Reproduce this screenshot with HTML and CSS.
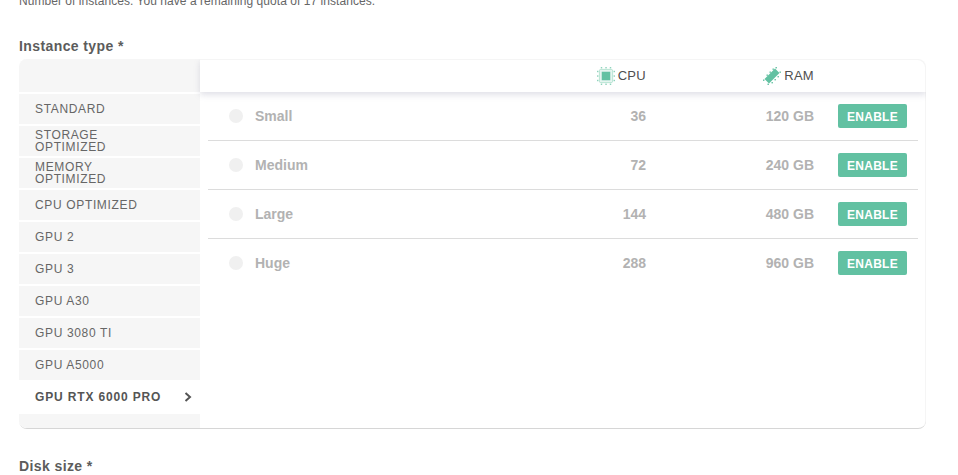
FILE: index.html
```html
<!DOCTYPE html>
<html lang="en">

<head>
    <meta charset="UTF-8">
    <title>Instance type</title>
    <link rel="stylesheet" href="styles.css">
</head>

<body>
    <p class="quota">Number of instances. You have a remaining quota of 17 instances.</p>

    <h2 class="field-label">Instance type *</h2>
    <div class="picker">
        <ul class="tabs">
            <li class="tab-top"></li>
            <li class="tab">STANDARD</li>
            <li class="tab">STORAGE OPTIMIZED</li>
            <li class="tab">MEMORY OPTIMIZED</li>
            <li class="tab">CPU OPTIMIZED</li>
            <li class="tab">GPU 2</li>
            <li class="tab">GPU 3</li>
            <li class="tab">GPU A30</li>
            <li class="tab">GPU 3080 TI</li>
            <li class="tab">GPU A5000</li>
            <li class="tab tab-active">GPU RTX 6000 PRO
                <svg class="chevron" width="8" height="10" viewBox="0 0 8 10">
                    <path d="M1.5 1 L6 5 L1.5 9" fill="none" stroke="#555" stroke-width="2" />
                </svg>
            </li>
            <li class="tab-bottom"></li>
        </ul>

        <div class="plans">
            <div class="plans-head">
                <div class="col-cpu">
                    <svg width="18" height="18" viewBox="0 0 19 19">
                        <rect x="2.5" y="2.5" width="14" height="14" rx="1.5" fill="#e6f5f0" stroke="#b5e2d2" />
                        <rect x="5" y="5" width="9" height="9" fill="#62c1a2" />
                        <g fill="#8ed3bc">
                            <rect x="4" y="0" width="1.5" height="1.5" />
                            <rect x="8.8" y="0" width="1.5" height="1.5" />
                            <rect x="13.5" y="0" width="1.5" height="1.5" />
                            <rect x="4" y="17.5" width="1.5" height="1.5" />
                            <rect x="8.8" y="17.5" width="1.5" height="1.5" />
                            <rect x="13.5" y="17.5" width="1.5" height="1.5" />
                            <rect x="0" y="4" width="1.5" height="1.5" />
                            <rect x="0" y="8.8" width="1.5" height="1.5" />
                            <rect x="0" y="13.5" width="1.5" height="1.5" />
                            <rect x="17.5" y="4" width="1.5" height="1.5" />
                            <rect x="17.5" y="8.8" width="1.5" height="1.5" />
                            <rect x="17.5" y="13.5" width="1.5" height="1.5" />
                        </g>
                    </svg>
                    CPU
                </div>
                <div class="col-ram">
                    <svg width="18" height="18" viewBox="0 0 18 18">
                        <path d="M1.5 12 L12 1.5 L16.5 6 L6 16.5 Z" fill="#62c1a2" />
                        <g fill="#62c1a2">
                            <rect x="12.5" y="0" width="1.4" height="1.4" />
                            <rect x="9.5" y="1.5" width="1.4" height="1.4" />
                            <rect x="6.5" y="4.5" width="1.4" height="1.4" />
                            <rect x="3.5" y="7.5" width="1.4" height="1.4" />
                            <rect x="0" y="12.5" width="1.4" height="1.4" />
                            <rect x="16.5" y="4.5" width="1.4" height="1.4" />
                            <rect x="14.5" y="9" width="1.4" height="1.4" />
                            <rect x="11.5" y="12" width="1.4" height="1.4" />
                            <rect x="8.5" y="15" width="1.4" height="1.4" />
                            <rect x="4.5" y="16.6" width="1.4" height="1.4" />
                        </g>
                    </svg>
                    RAM
                </div>
            </div>

            <div class="plan">
                <span class="radio"></span>
                <span class="plan-name">Small</span>
                <span class="col-cpu">36</span>
                <span class="col-ram">120 GB</span>
                <button class="enable">ENABLE</button>
            </div>
            <div class="plan">
                <span class="radio"></span>
                <span class="plan-name">Medium</span>
                <span class="col-cpu">72</span>
                <span class="col-ram">240 GB</span>
                <button class="enable">ENABLE</button>
            </div>
            <div class="plan">
                <span class="radio"></span>
                <span class="plan-name">Large</span>
                <span class="col-cpu">144</span>
                <span class="col-ram">480 GB</span>
                <button class="enable">ENABLE</button>
            </div>
            <div class="plan">
                <span class="radio"></span>
                <span class="plan-name">Huge</span>
                <span class="col-cpu">288</span>
                <span class="col-ram">960 GB</span>
                <button class="enable">ENABLE</button>
            </div>
        </div>
    </div>

    <h2 class="field-label disk-label">Disk size *</h2>
</body>

</html>
```

FILE: styles.css
```css
html,
body {
    height: 475px;
    overflow: hidden;
}

body {
    margin: 0;
    padding: 0 19px;
    background-color: #fff;
    color: #555;
    font-family: "Liberation Sans", Arial, sans-serif;
}

.quota {
    margin: -7px 0 0;
    font-size: 12px;
    line-height: 16px;
    letter-spacing: 0.05px;
    color: #666;
}

.field-label {
    margin: 28px 0 0;
    font-size: 14px;
    line-height: 18px;
    font-weight: bold;
    letter-spacing: 0.4px;
    color: #5c5c5c;
}

.disk-label {
    margin-top: 28px;
}

.picker {
    display: flex;
    width: 907px;
    height: 369px;
    margin-top: 4px;
    border-bottom: 1px solid #d6d6d6;
    border-radius: 8px;
    overflow: hidden;
    box-shadow: inset -1px 1px 0 #f5f5f5;
}

.tabs {
    width: 181px;
    flex: none;
    display: flex;
    flex-direction: column;
    margin: 0;
    padding: 0;
    list-style: none;
    background-color: #fff;
}

.tab-top {
    height: 33px;
    margin-bottom: 2px;
    background-color: #f6f6f6;
}

.tab-bottom {
    flex: 1;
    background-color: #f6f6f6;
}

.tab {
    display: flex;
    align-items: center;
    justify-content: space-between;
    height: 30px;
    margin-bottom: 2px;
    padding: 0 40px 0 16px;
    background-color: #f6f6f6;
    font-size: 12px;
    line-height: 12px;
    letter-spacing: 0.65px;
    color: #666;
}

.tab-active {
    box-sizing: border-box;
    height: 32px;
    margin-bottom: 0;
    padding: 0 8px 2px 16px;
    background-color: #fff;
    font-weight: bold;
    letter-spacing: 0.85px;
    color: #555;
}

.plans {
    flex: 1;
    min-width: 0;
}

.plans-head {
    position: relative;
    display: flex;
    align-items: center;
    height: 33px;
    padding-right: 112px;
    box-shadow: 0 3px 6px rgba(120, 120, 150, 0.22);
}

.plans-head .col-cpu,
.plans-head .col-ram {
    display: flex;
    align-items: center;
    justify-content: flex-end;
    gap: 3px;
    color: #4f4f4f;
    font-size: 13px;
    letter-spacing: 0.3px;
}

.plan {
    display: flex;
    align-items: center;
    height: 48px;
    margin: 0 8px;
    padding-left: 21px;
    border-bottom: 1px solid #dcdcdc;
    font-size: 14px;
    font-weight: bold;
    color: #b2b2b2;
}

.plan:last-child {
    border-bottom: none;
}

.radio {
    width: 14px;
    height: 14px;
    flex: none;
    border-radius: 50%;
    background-color: #f0f0f0;
}

.plan-name {
    width: 120px;
    margin-left: 12px;
}

.col-cpu {
    width: 446px;
    flex: none;
    text-align: right;
}

.col-ram {
    width: 168px;
    flex: none;
    text-align: right;
}

.plan .col-cpu {
    width: 271px;
}

.enable {
    width: 69px;
    height: 24px;
    margin-left: 24px;
    padding: 1px 0 0;
    border: none;
    border-radius: 2px;
    background-color: #62c1a2;
    color: #fff;
    font-family: inherit;
    font-size: 12px;
    font-weight: bold;
    letter-spacing: 0.25px;
}
```
